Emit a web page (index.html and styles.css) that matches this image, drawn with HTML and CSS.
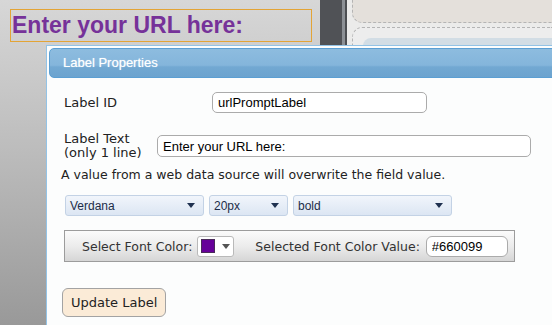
FILE: index.html
```html
<!DOCTYPE html>
<html lang="en">
<head>
    <meta charset="UTF-8">
    <title>Label Properties</title>
    <link rel="stylesheet" href="styles.css">
</head>
<body>
    <div class="stage">
        <div class="canvas">
            <div class="url-label">Enter your URL here:</div>
        </div>
        <div class="rail"><span class="rail-edge"></span></div>
        <div class="panel">
            <div class="dash-box top-box"><span class="pill"></span></div>
            <div class="dash-box lower-box"><div class="inner-area"></div></div>
        </div>
    </div>

    <div class="dialog">
        <div class="dialog-head">Label Properties</div>
        <div class="dialog-body">
            <div class="row row-id">
                <label class="field-label" for="labelId">Label ID</label>
                <input class="text-input id-input" id="labelId" type="text" value="urlPromptLabel">
            </div>
            <div class="row row-text">
                <label class="field-label" for="labelText">Label Text<br>(only 1 line)</label>
                <input class="text-input text-field" id="labelText" type="text" value="Enter your URL here:">
            </div>
            <p class="note">A value from a web data source will overwrite the field value.</p>
            <div class="selects">
                <div class="select sel-family"><span>Verdana</span><i class="arrow"></i></div>
                <div class="select sel-size"><span>20px</span><i class="arrow"></i></div>
                <div class="select sel-weight"><span>bold</span><i class="arrow"></i></div>
            </div>
            <div class="color-bar">
                <span>Select Font Color:</span>
                <div class="color-btn"><span class="swatch"></span><i class="arrow grey"></i></div>
                <span class="value-caption">Selected Font Color Value:</span>
                <input class="text-input color-input" type="text" value="#660099">
            </div>
            <button class="update-btn">Update Label</button>
        </div>
    </div>
</body>
</html>
```

FILE: styles.css
```css
body {
    margin: 0;
    padding: 0;
    width: 552px;
    height: 325px;
    overflow: hidden;
    position: relative;
    font-family: 'DejaVu Sans', Verdana, sans-serif;
    background: linear-gradient(#d7d7d7, #bdbdbd 45%, #999999);
}
.stage {
    display: flex;
    height: 325px;
}
.canvas {
    width: 310px;
    padding: 9px 0 0 10px;
}
.url-label {
    width: 299px;
    height: 31px;
    border: 1px solid #e3a436;
    padding-left: 1px;
    font-family: 'Liberation Sans', Arial, sans-serif;
    font-size: 23px;
    font-weight: bold;
    line-height: 31px;
    color: #763299;
}
.rail {
    width: 22px;
    background: #505256;
    border-right: 3px solid #8c9095;
    display: flex;
    justify-content: flex-end;
}
.rail-edge {
    width: 2px;
    background: #4c4e52;
    margin-right: -5px;
}
.panel {
    flex: 1;
    background: #ebebea;
    padding-left: 5px;
    margin-left: 2px;
}
.dash-box {
    border: 1px dashed #b4b4b4;
    border-right: none;
    border-radius: 10px 0 0 10px;
}
.top-box {
    height: 33px;
    margin-top: -12px;
    background: #e4e0db;
    position: relative;
}
.pill {
    position: absolute;
    left: 15px;
    top: -8px;
    width: 66px;
    height: 10px;
    border: 1px solid #9aa1a9;
    border-radius: 6px;
    background: #e7e3de;
}
.lower-box {
    margin-top: 4px;
    height: 40px;
    background: #ededed;
    padding: 10px 0 0 10px;
}
.inner-area {
    height: 40px;
    background: #d2dde5;
    border-radius: 8px 0 0 0;
}
.dialog {
    position: absolute;
    left: 46px;
    top: 45px;
    width: 540px;
    height: 300px;
    border: 1px solid #93c3e6;
    padding: 2px;
    background: #fcfdfd;
}
.dialog-head {
    height: 28px;
    border: 1px solid #5b9fd3;
    border-radius: 5px;
    padding-left: 13px;
    font-family: 'Liberation Sans', Arial, sans-serif;
    font-size: 13px;
    line-height: 28px;
    color: #ffffff;
    text-shadow: 0 0 1px rgba(255, 255, 255, 0.6);
    background: linear-gradient(#8dbcdf, #84b5db 58%, #72a8d2 64%, #6ca3cf);
}
.dialog-body {
    padding: 14px 0 0 15px;
    font-size: 13px;
    color: #222222;
}
.row {
    display: flex;
}
.row-id {
    align-items: center;
}
.row-id .field-label {
    width: 148px;
}
.row-text {
    margin-top: 19px;
    align-items: flex-start;
}
.row-text .field-label {
    width: 93px;
    line-height: 14px;
}
.field-label {
    display: block;
}
.text-input {
    box-sizing: border-box;
    height: 21px;
    border: 1px solid #ababab;
    border-radius: 5px;
    padding: 0 5px;
    font-family: 'Liberation Sans', Arial, sans-serif;
    font-size: 13px;
    color: #000000;
    background: #ffffff;
}
.id-input {
    width: 215px;
}
.text-field {
    width: 374px;
    height: 22px;
    margin-top: 3px;
}
.note {
    margin: 7px 0 0 -3px;
    font-size: 12.5px;
    line-height: 16px;
}
.selects {
    display: flex;
    gap: 5px;
    margin-top: 12px;
    margin-left: 1px;
}
.select {
    box-sizing: border-box;
    height: 21px;
    border: 1px solid #c3d2e5;
    border-radius: 3px;
    background: linear-gradient(#f1f5fb, #dce6f3);
    display: flex;
    align-items: center;
    justify-content: space-between;
    padding: 0 8px 0 4px;
    font-family: 'Liberation Sans', Arial, sans-serif;
    font-size: 12px;
    color: #1c2c48;
}
.sel-family {
    width: 139px;
}
.sel-size {
    width: 79px;
}
.sel-weight {
    width: 159px;
}
.arrow {
    width: 0;
    height: 0;
    border-left: 4px solid transparent;
    border-right: 4px solid transparent;
    border-top: 5px solid #1f3150;
}
.arrow.grey {
    border-top-color: #555555;
}
.color-bar {
    box-sizing: border-box;
    width: 451px;
    height: 32px;
    margin-top: 14px;
    border: 1px solid #9c9c9c;
    background: linear-gradient(#fbfbfb, #ececec 50%, #d6d6d6);
    display: flex;
    align-items: center;
    padding-left: 17px;
    font-size: 12.5px;
    color: #333333;
}
.color-btn {
    box-sizing: border-box;
    width: 37px;
    height: 21px;
    margin-left: 5px;
    border: 1px solid #b9b9b9;
    border-radius: 3px;
    background: #ffffff;
    display: flex;
    align-items: center;
    padding-left: 3px;
    gap: 7px;
}
.swatch {
    width: 12px;
    height: 12px;
    background: #660099;
    border: 1px solid #4a2a5a;
}
.value-caption {
    margin-left: 21px;
}
.color-input {
    width: 82px;
    margin-left: 6px;
    border-radius: 6px;
}
.update-btn {
    display: block;
    margin: 26px 0 0 -2px;
    height: 29px;
    padding: 0 8px;
    border: 1px solid #a3a3a3;
    border-radius: 6px;
    background: #fbebd7;
    font-family: 'DejaVu Sans', Verdana, sans-serif;
    font-size: 13px;
    color: #222222;
}
```
